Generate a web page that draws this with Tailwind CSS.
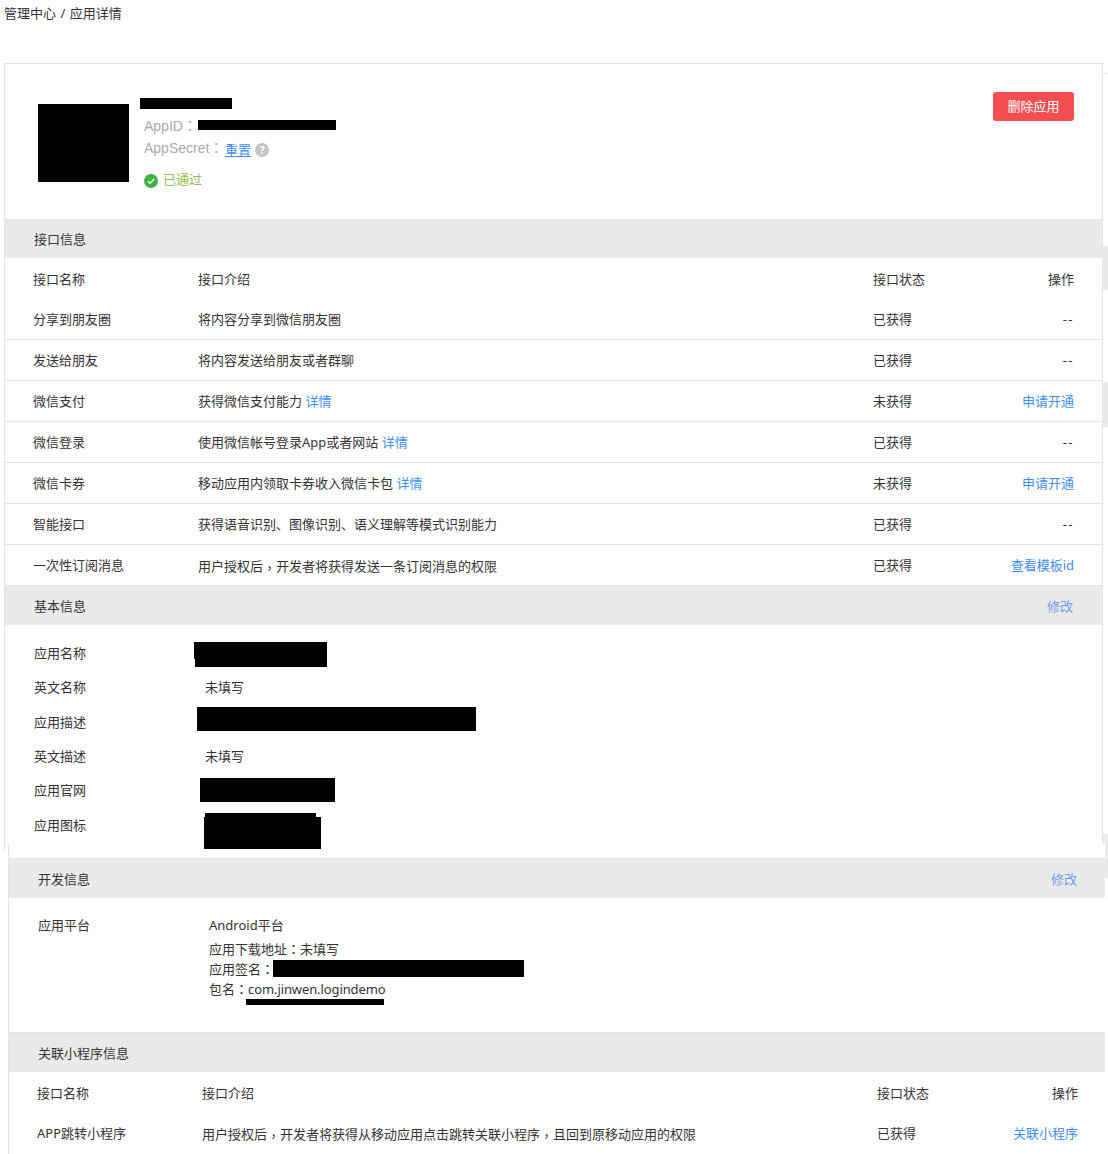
<!DOCTYPE html>
<html lang="zh-CN">
<head>
<meta charset="utf-8">
<script src="https://cdn.jsdelivr.net/npm/@tailwindcss/browser@4"></script>
<title>应用详情</title>
</head>
<body class="bg-white">
<div class="relative h-[1154px] w-[1108px] overflow-hidden font-['Noto_Sans','Noto_Sans_CJK_SC',sans-serif] text-[13px] text-[#333]">
  <div class="absolute left-[1103px] top-[73px] h-px w-[5px] bg-[#eaeaea]"></div>
  <div class="absolute left-[1103px] top-[246px] h-[44px] w-[5px] bg-[#eaeaea]"></div>
  <div class="absolute left-[1103px] top-[382px] h-[45px] w-[5px] bg-[#eaeaea]"></div>
  <div class="absolute left-[1103px] top-[834px] h-[44px] w-[5px] bg-[#eaeaea]"></div>

  <div class="h-[63px] pl-1 pt-[3px] leading-5">管理中心<span class="mx-[1px]"> / </span>应用详情</div>

  <section class="ml-1 h-[788px] w-[1099px] border border-b-0 border-[#e4e4e4]">
    <div class="flex h-[155px] items-start pl-[33px]">
      <div class="mt-[40px] h-[78px] w-[91px] bg-black"></div>
      <div class="ml-[15px] pt-[34px]">
        <div class="ml-[-4px] h-[11px] w-[92px] bg-black"></div>
        <div class="mt-[7px] flex h-[20px] items-center text-[14px] leading-5 text-[#aaa]">
          <span lang="zh-TW" class="w-[54px] font-['Liberation_Sans','Noto_Sans_CJK_TC',sans-serif]">AppID：</span><span class="mb-[2px] h-[10px] w-[138px] bg-black"></span>
        </div>
        <div class="mt-[1px] flex h-[22px] items-center text-[14px] leading-5 text-[#aaa]">
          <span lang="zh-TW" class="w-[81px] font-['Liberation_Sans','Noto_Sans_CJK_TC',sans-serif]">AppSecret：</span>
          <a class="mt-[3px] text-[13px] text-[#3e8ef7] underline">重置</a>
          <span class="ml-[4px] mt-[3px] flex h-[14px] w-[14px] items-center justify-center rounded-full bg-[#c4c4c4] text-[11px] font-bold leading-none text-white">?</span>
        </div>
        <div class="mt-[11px] flex h-[20px] items-center text-[13px] text-[#93c04a]">
          <svg class="mr-[5px] mt-[2px] h-[14px] w-[14px]" viewBox="0 0 14 14" aria-hidden="true"><circle cx="7" cy="7" r="7" fill="#3fb13f"/><path d="M3.8 7.2 6 9.3 10.2 5.1" fill="none" stroke="#fff" stroke-width="1.4"/></svg>
          <span>已通过</span>
        </div>
      </div>
      <button class="ml-auto mr-[28px] mt-[28px] h-[29px] w-[81px] rounded-[3px] bg-[#f54e50] text-[13px] text-white">删除应用</button>
    </div>

    <div class="flex h-[39px] items-center bg-[#eaeaea] pl-[29px] pt-[2px]">接口信息</div>

    <div class="grid h-[41px] grid-cols-[165px_1fr_120px_81px] items-center pl-[28px] pr-[28px] pt-[2px]">
      <div>接口名称</div><div>接口介绍</div><div>接口状态</div><div class="text-right">操作</div>
    </div>
    <div class="grid h-[41px] grid-cols-[165px_1fr_120px_81px] items-center border-b border-[#e4e4e4] pl-[28px] pr-[28px] pt-[2px]">
      <div>分享到朋友圈</div><div>将内容分享到微信朋友圈</div><div>已获得</div><div class="text-right tracking-[1.5px]">--</div>
    </div>
    <div class="grid h-[41px] grid-cols-[165px_1fr_120px_81px] items-center border-b border-[#e4e4e4] pl-[28px] pr-[28px] pt-[2px]">
      <div>发送给朋友</div><div>将内容发送给朋友或者群聊</div><div>已获得</div><div class="text-right tracking-[1.5px]">--</div>
    </div>
    <div class="grid h-[41px] grid-cols-[165px_1fr_120px_81px] items-center border-b border-[#e4e4e4] pl-[28px] pr-[28px] pt-[2px]">
      <div>微信支付</div><div>获得微信支付能力 <a class="text-[#3e8ef7]">详情</a></div><div>未获得</div><div class="text-right text-[#3e8ef7]">申请开通</div>
    </div>
    <div class="grid h-[41px] grid-cols-[165px_1fr_120px_81px] items-center border-b border-[#e4e4e4] pl-[28px] pr-[28px] pt-[2px]">
      <div>微信登录</div><div>使用微信帐号登录App或者网站 <a class="text-[#3e8ef7]">详情</a></div><div>已获得</div><div class="text-right tracking-[1.5px]">--</div>
    </div>
    <div class="grid h-[41px] grid-cols-[165px_1fr_120px_81px] items-center border-b border-[#e4e4e4] pl-[28px] pr-[28px] pt-[2px]">
      <div>微信卡券</div><div>移动应用内领取卡券收入微信卡包 <a class="text-[#3e8ef7]">详情</a></div><div>未获得</div><div class="text-right text-[#3e8ef7]">申请开通</div>
    </div>
    <div class="grid h-[41px] grid-cols-[165px_1fr_120px_81px] items-center border-b border-[#e4e4e4] pl-[28px] pr-[28px] pt-[2px]">
      <div>智能接口</div><div>获得语音识别、图像识别、语义理解等模式识别能力</div><div>已获得</div><div class="text-right tracking-[1.5px]">--</div>
    </div>
    <div class="grid h-[40px] grid-cols-[165px_1fr_120px_81px] items-center pl-[28px] pr-[28px] pt-[2px]">
      <div>一次性订阅消息</div><div>用户授权后<span lang="zh-TW" class="relative top-[2px] font-['Noto_Sans_CJK_TC']">，</span>开发者将获得发送一条订阅消息的权限</div><div>已获得</div><div class="text-right text-[#3e8ef7]">查看模板id</div>
    </div>

    <div class="flex h-[40px] items-center justify-between border-t border-[#e4e4e4] bg-[#eaeaea] pl-[29px] pr-[29px] pt-[2px]">
      <span>基本信息</span><a class="text-[#6f9cf5]">修改</a>
    </div>

    <div class="pl-[29px] pt-[10.6px]">
      <div class="flex h-[34.4px] items-center"><div class="mt-[2px] w-[160px]">应用名称</div><div class="relative ml-[1px] mt-[3px] h-[25px] w-[132px] bg-black"><div class="absolute left-[-1px] top-0 h-[17px] w-px bg-black"></div></div></div>
      <div class="flex h-[34.4px] items-center"><div class="mt-[2px] w-[160px]">英文名称</div><div class="ml-[11px] mt-[2px]">未填写</div></div>
      <div class="flex h-[34.4px] items-center"><div class="mt-[2px] w-[160px]">应用描述</div><div class="mb-[6px] ml-[3px] h-[24px] w-[279px] bg-black"></div></div>
      <div class="flex h-[34.4px] items-center"><div class="mt-[2px] w-[160px]">英文描述</div><div class="ml-[11px] mt-[2px]">未填写</div></div>
      <div class="flex h-[34.4px] items-center"><div class="w-[160px]">应用官网</div><div class="ml-[6px] h-[24px] w-[135px] bg-black"></div></div>
      <div class="flex h-[34.4px] items-center"><div class="mt-[2px] w-[160px]">应用图标</div><div class="relative z-10 ml-[10px] mt-[12px] w-[117px]"><div class="ml-px h-[4px] w-[111px] bg-black"></div><div class="h-[32px] bg-black"></div></div></div>
    </div>
  </section>

  <section class="relative mt-[-7px] ml-2 h-[310px] w-[1097px] border-l border-[#e4e4e4] bg-white">
    <div class="h-[14px]"></div>
    <div class="flex h-[40px] items-center justify-between border-t border-[#e4e4e4] bg-[#eaeaea] pl-[29px] pr-[28px] pt-[2px]">
      <span>开发信息</span><a class="text-[#6f9cf5]">修改</a>
    </div>
    <div class="flex h-[134px] pl-[29px] pt-[18px]">
      <div class="w-[171px] leading-[18px]">应用平台</div>
      <div>
        <div class="leading-[18px]">Android平台</div>
        <div class="mt-[5px] h-[20px] leading-5">应用下载地址<span lang="zh-TW" class="font-['Noto_Sans_CJK_TC']">：</span>未填写</div>
        <div class="flex h-[20px] items-center leading-5"><span class="w-[64px] shrink-0 whitespace-nowrap">应用签名<span lang="zh-TW" class="font-['Noto_Sans_CJK_TC']">：</span></span><span class="mb-[1px] h-[17px] w-[251px] bg-black"></span></div>
        <div class="relative h-[20px] leading-5">包名<span lang="zh-TW" class="font-['Noto_Sans_CJK_TC']">：</span><span class="tracking-[-0.1px]">com.jinwen.logindemo</span><div class="absolute left-[37px] top-[20px] h-[6px] w-[138px] bg-black"></div></div>
      </div>
    </div>
    <div class="flex h-[40px] items-center border-t border-[#e4e4e4] bg-[#eaeaea] pl-[29px] pt-[2px]">关联小程序信息</div>
    <div class="grid h-[41px] grid-cols-[165px_1fr_120px_81px] items-center pl-[28px] pr-[27px] pt-[2px]">
      <div>接口名称</div><div>接口介绍</div><div>接口状态</div><div class="text-right">操作</div>
    </div>
    <div class="grid h-[40px] grid-cols-[165px_1fr_120px_81px] items-center pl-[28px] pr-[27px] pt-[2px]">
      <div>APP跳转小程序</div><div>用户授权后<span lang="zh-TW" class="relative top-[2px] font-['Noto_Sans_CJK_TC']">，</span>开发者将获得从移动应用点击跳转关联小程序<span lang="zh-TW" class="relative top-[2px] font-['Noto_Sans_CJK_TC']">，</span>且回到原移动应用的权限</div><div>已获得</div><div class="text-right text-[#3e8ef7]">关联小程序</div>
    </div>
  </section>
</div>
</body>
</html>
